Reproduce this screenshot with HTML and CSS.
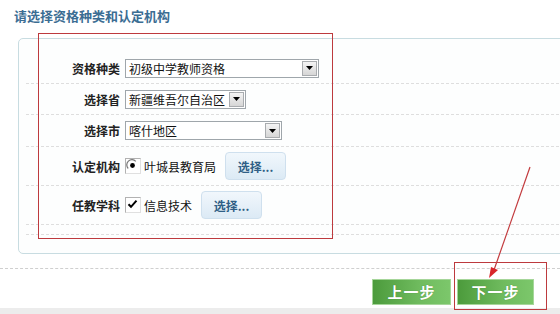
FILE: index.html
```html
<!DOCTYPE html>
<html lang="zh-CN">
<head>
    <meta charset="UTF-8">
    <title>请选择资格种类和认定机构</title>
    <link rel="stylesheet" href="styles.css">
</head>
<body>
    <div class="page">
        <h2 class="title">请选择资格种类和认定机构</h2>

        <div class="panel">
            <div class="row">
                <label class="label">资格种类</label>
                <div class="select w-194">
                    <span class="value">初级中学教师资格</span>
                    <span class="arrow"><svg width="7" height="4" viewBox="0 0 7 4"><path d="M0 0H7L3.5 4Z" fill="#000"/></svg></span>
                </div>
            </div>
            <div class="row">
                <label class="label">选择省</label>
                <div class="select w-121">
                    <span class="value">新疆维吾尔自治区</span>
                    <span class="arrow"><svg width="7" height="4" viewBox="0 0 7 4"><path d="M0 0H7L3.5 4Z" fill="#000"/></svg></span>
                </div>
            </div>
            <div class="row">
                <label class="label">选择市</label>
                <div class="select w-157">
                    <span class="value">喀什地区</span>
                    <span class="arrow"><svg width="7" height="4" viewBox="0 0 7 4"><path d="M0 0H7L3.5 4Z" fill="#000"/></svg></span>
                </div>
            </div>
            <div class="row tall">
                <label class="label">认定机构</label>
                <span class="box">
                    <svg width="15" height="15" viewBox="0 0 15 15">
                        <path d="M3.2 10.5A5 5 0 0 1 10.8 3.3" fill="none" stroke="#777" stroke-width="1.2"/>
                        <circle cx="7.5" cy="7.5" r="2.4" fill="#000"/>
                    </svg>
                </span>
                <span class="text">叶城县教育局</span>
                <button class="pick">选择...</button>
            </div>
            <div class="row tall">
                <label class="label">任教学科</label>
                <span class="box">
                    <svg width="15" height="15" viewBox="0 0 15 15">
                        <path d="M3.5 7.2L6 9.8L11.5 3.6" fill="none" stroke="#000" stroke-width="2"/>
                    </svg>
                </span>
                <span class="text">信息技术</span>
                <button class="pick">选择...</button>
            </div>
            <div class="row spacer"></div>
        </div>

        <div class="actions">
            <button class="step">上一步</button>
            <button class="step">下一步</button>
        </div>
        <div class="footer"></div>

        <!-- red annotations drawn over the form -->
        <div class="mark mark-form"></div>
        <div class="mark mark-next"></div>
        <svg class="pointer" width="560" height="314" viewBox="0 0 560 314">
            <line x1="530" y1="167" x2="494" y2="270" stroke="#c23a3d" stroke-width="1.2"/>
            <path d="M489 278L491 267L498 270Z" fill="#d8262b"/>
        </svg>
    </div>
</body>
</html>
```

FILE: styles.css
```css
body {
    margin: 0;
    background-color: #ffffff;
    font-family: "Noto Sans CJK SC", "Noto Sans", sans-serif;
    font-size: 12px;
    color: #222;
}

.page {
    position: relative;
    width: 560px;
    height: 314px;
    overflow: hidden;
}

.title {
    box-sizing: border-box;
    height: 38px;
    margin: 0;
    padding: 7px 0 0 14px;
    font-size: 13px;
    line-height: 17px;
    font-weight: bold;
    color: #3b6d93;
}

.panel {
    margin: 0 -10px 0 18px;
    padding: 14px 0 18px 7px;
    border: 1px solid #c8dce1;
    border-radius: 5px;
    background-color: #fdfefe;
}

.row {
    display: flex;
    align-items: center;
    height: 30px;
    border-bottom: 1px dashed #dedede;
}

.row:nth-child(3) {
    height: 31px;
}

.row.tall {
    height: 38px;
}

.row.spacer {
    height: 9px;
}

.label {
    width: 94px;
    padding-right: 5px;
    text-align: right;
    font-weight: bold;
    color: #222;
}

.select {
    display: flex;
    align-items: center;
    box-sizing: border-box;
    height: 19px;
    border: 1px solid #9fa6ab;
    background-color: #fff;
}

.w-194 { width: 194px; }
.w-121 { width: 121px; }
.w-157 { width: 157px; }

.select .value {
    flex: 1;
    padding-left: 3px;
    line-height: 17px;
    white-space: nowrap;
    overflow: hidden;
    color: #111;
}

.select .arrow {
    display: flex;
    align-items: center;
    justify-content: center;
    box-sizing: border-box;
    width: 15px;
    height: 15px;
    margin-right: 1px;
    border: 1px solid #a9acaf;
    background: linear-gradient(#f4f4f4, #d6d6d6);
}

.box {
    display: flex;
    box-sizing: border-box;
    width: 16px;
    height: 16px;
    border: 1px solid #b2b2b2;
    border-right-color: #e0e0e0;
    border-bottom-color: #e0e0e0;
    background-color: #fff;
}

.box svg {
    margin: -1px;
}

.text {
    margin-left: 3px;
    color: #111;
}

.pick {
    height: 28px;
    width: 61px;
    margin-left: 9px;
    padding: 0;
    border: 1px solid #cfe0ee;
    border-radius: 4px;
    background: linear-gradient(#f1f7fc, #dceaf5);
    font-family: inherit;
    font-size: 12px;
    font-weight: bold;
    color: #2f5f86;
}

.actions {
    display: flex;
    justify-content: flex-end;
    gap: 6px;
    margin-top: 14px;
    padding: 10px 26px 0 0;
    border-top: 1px dashed #cfcfcf;
}

.step {
    width: 79px;
    height: 26px;
    padding: 0;
    border: 1px solid #a6d69a;
    background: linear-gradient(to right, #4c9b3c, #6fbb5e 60%, #7cc76b);
    font-family: inherit;
    font-size: 15px;
    font-weight: bold;
    line-height: 22px;
    color: #fff;
    letter-spacing: 1px;
    text-shadow: 0 0 1px rgba(0, 60, 0, 0.4);
}

.step + .step {
    width: 77px;
}

.footer {
    height: 10px;
    margin-top: 3px;
    background-color: #ececec;
}

.mark {
    position: absolute;
    border: 1px solid #bd3a3e;
}

.mark-form {
    left: 38px;
    top: 33px;
    width: 293px;
    height: 204px;
}

.mark-next {
    left: 454px;
    top: 262px;
    width: 91px;
    height: 46px;
}

.pointer {
    position: absolute;
    left: 0;
    top: 0;
}
```
